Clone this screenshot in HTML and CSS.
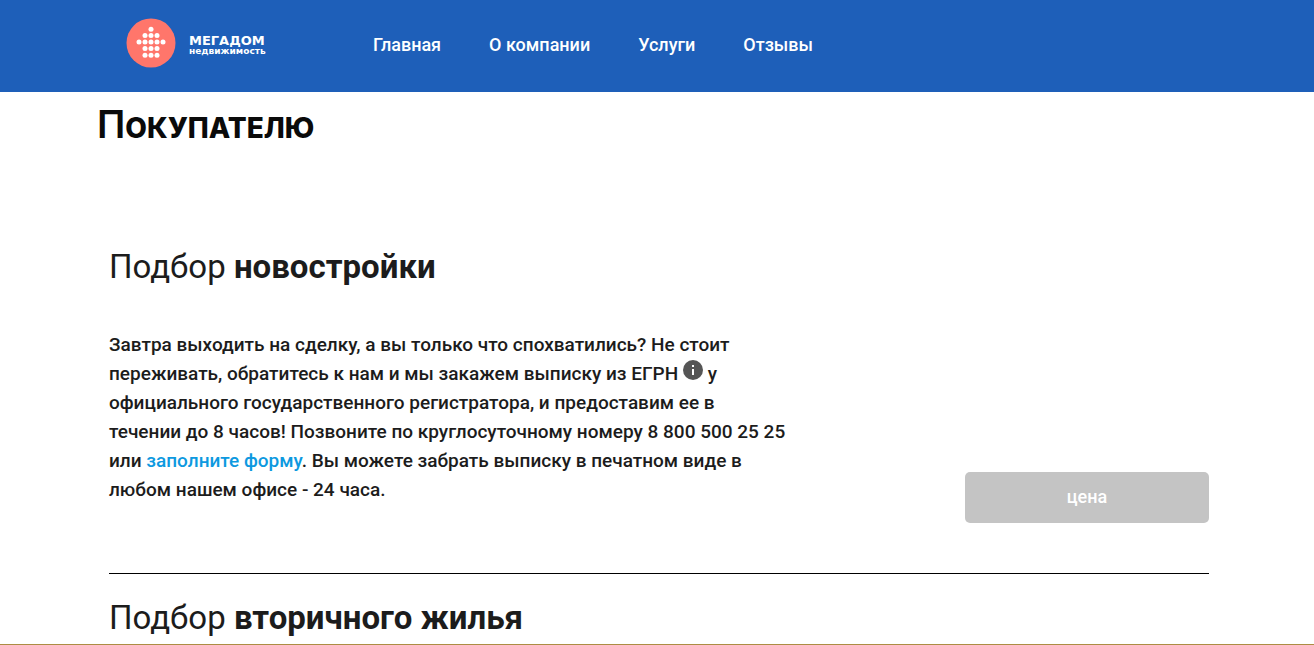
FILE: index.html
```html
<!DOCTYPE html>
<html lang="ru">
<head>
<meta charset="utf-8">
<meta name="viewport" content="width=device-width, initial-scale=1">
<title>Мегадом — Покупателю</title>
<link rel="stylesheet" href="styles.css">
</head>
<body>
<header class="header">
  <div class="container header-inner">
    <a class="logo" href="#">
      <svg class="logo-mark" viewBox="0 0 50 50" aria-hidden="true">
        <circle cx="25" cy="25" r="24.5" fill="#ff766b"/>
        <g fill="#fff">
          <circle cx="25" cy="11.2" r="2.5"/>
          <circle cx="19" cy="17.4" r="2.5"/><circle cx="25" cy="17.4" r="2.5"/><circle cx="31" cy="17.4" r="2.5"/>
          <circle cx="13" cy="24" r="2.5"/><circle cx="19" cy="24" r="2.5"/><circle cx="25" cy="24" r="2.5"/><circle cx="31" cy="24" r="2.5"/><circle cx="37" cy="24" r="2.5"/>
          <circle cx="19" cy="30.5" r="2.5"/><circle cx="25" cy="30.5" r="2.5"/><circle cx="31" cy="30.5" r="2.5"/>
          <circle cx="19" cy="37.2" r="2.5"/><circle cx="25" cy="37.2" r="2.5"/><circle cx="31" cy="37.2" r="2.5"/>
        </g>
      </svg>
      <span class="logo-text">
        <span class="logo-name">МЕГАДОМ</span>
        <span class="logo-sub">недвижимость</span>
      </span>
    </a>
    <nav class="nav">
      <a href="#">Главная</a>
      <a href="#">О компании</a>
      <a href="#">Услуги</a>
      <a href="#">Отзывы</a>
    </nav>
  </div>
</header>
<main class="container">
  <h1 class="page-title">Покупателю</h1>
  <div class="services">
    <section class="service">
      <h2 class="service-title">Подбор <b>новостройки</b></h2>
      <div class="service-body">
        <p class="service-text">Завтра выходить на сделку, а вы только что спохватились? Не стоит переживать, обратитесь к нам и мы закажем выписку из ЕГРН <svg class="info" viewBox="0 0 20 20" role="img" aria-label="Информация"><circle cx="10" cy="10" r="10" fill="#555"/><path d="M9 5h2v2H9zM9 9h2v6H9z" fill="#fff"/></svg> у официального государственного регистратора, и предоставим ее в течении до 8 часов! Позвоните по круглосуточному номеру 8 800 500 25 25 или <a href="#">заполните форму</a>. Вы можете забрать выписку в печатном виде в любом нашем офисе - 24 часа.</p>
        <button class="price" type="button">цена</button>
      </div>
    </section>
    <section class="service">
      <h2 class="service-title">Подбор <b>вторичного жилья</b></h2>
    </section>
  </div>
</main>
<div class="bottom-line"></div>
</body>
</html>
```
FILE: styles.css
```css
* {
  box-sizing: border-box;
}

body {
  margin: 0;
  background: #fff;
  color: #1c1c1c;
  font: 500 18px/29px Roboto, "Noto Sans", sans-serif;
}

a {
  text-decoration: none;
}

.container {
  max-width: 1120px;
  margin: 0 auto;
}

.header {
  background: #1e5fb9;
}

.header-inner {
  display: flex;
  align-items: center;
  justify-content: flex-start;
  padding: 18px 29px 24px;
}

.logo {
  display: flex;
  flex: 0 0 247px;
  align-items: center;
  gap: 13px;
  color: #fff;
}

.logo-mark {
  width: 50px;
  height: 50px;
}

.logo-text {
  display: flex;
  flex-direction: column;
  padding-top: 4px;
  font-family: "DejaVu Sans", sans-serif;
  font-weight: 700;
}

.logo-name {
  font-size: 13px;
  line-height: 12px;
}

.logo-sub {
  font-size: 9px;
  line-height: 9px;
}

.nav {
  display: flex;
  gap: 48px;
  padding-top: 2px;
}

.nav a {
  color: #fff;
}

.page-title {
  margin: 9px 0 0;
  color: #0a0a0a;
  font: 800 28px/46px Inter, sans-serif;
  text-transform: uppercase;
}

.page-title::first-letter {
  font-size: 38px;
  font-weight: 600;
}

.services {
  padding: 72px 8px 0 12px;
}

.service {
  padding: 20px 0 50px;
}

.service + .service {
  border-top: 1px solid #000;
}

.service:last-child {
  padding-bottom: 0;
}

.service-title {
  margin: 0;
  font-size: 33px;
  line-height: 48px;
  font-weight: 400;
}

.service-body {
  display: flex;
  justify-content: space-between;
  align-items: flex-end;
  padding-top: 39px;
}

.service-text {
  flex: 0 1 680px;
  margin: 0 0 19px;
  font-size: 19px;
}

.service-text a {
  color: #0d99e0;
}

.info {
  width: 20px;
  height: 20px;
  vertical-align: 0;
}

.price {
  width: 244px;
  height: 51px;
  padding: 0 0 2px;
  border: 0;
  border-radius: 5px;
  background: #c4c4c4;
  color: #fff;
  font: inherit;
}

.bottom-line {
  position: fixed;
  right: 0;
  bottom: 0;
  left: 0;
  height: 1px;
  background: #ac8d43;
}
```
